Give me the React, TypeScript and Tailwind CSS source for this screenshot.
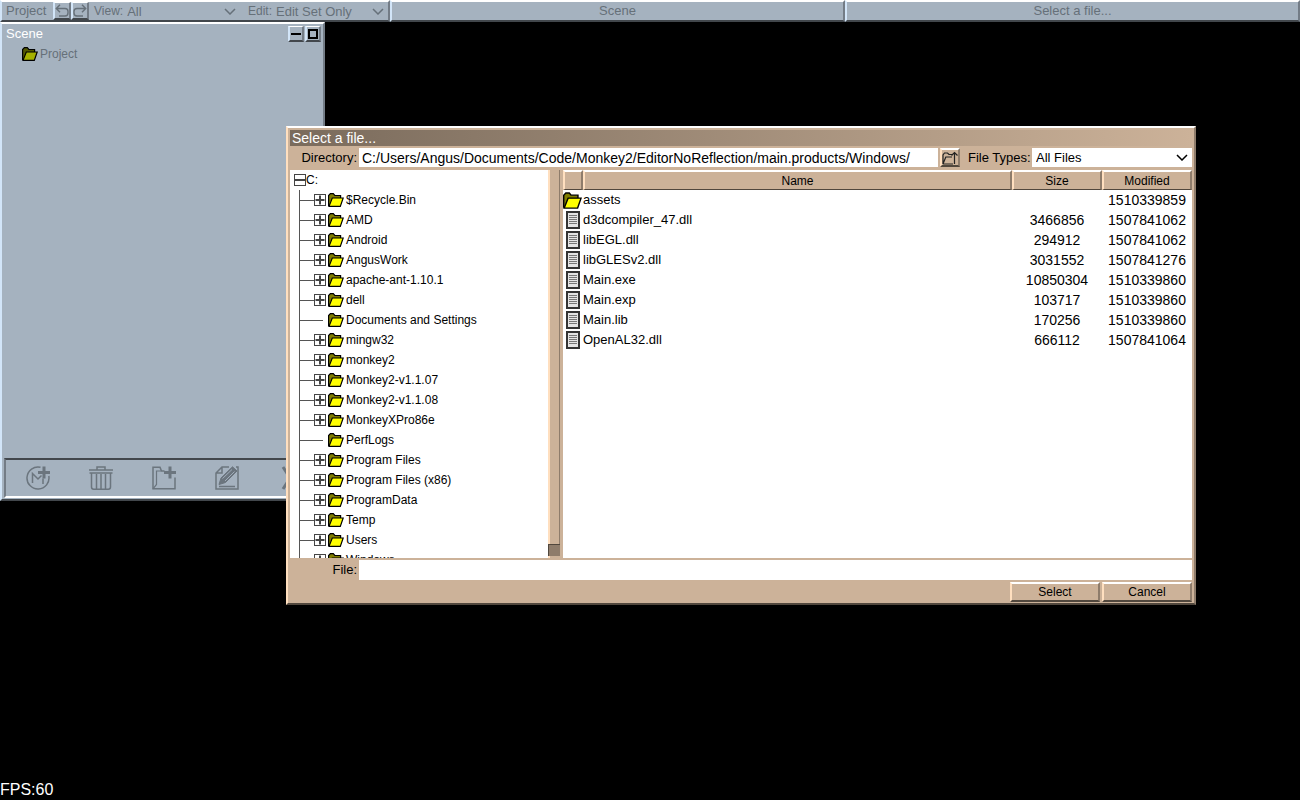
import { ReactNode } from "react";

interface TreeNode {
  name: string;
  leaf?: boolean;
}

interface FileEntry {
  name: string;
  size?: string;
  modified: string;
  folder?: boolean;
}

const tree: TreeNode[] = [
  { name: "$Recycle.Bin" },
  { name: "AMD" },
  { name: "Android" },
  { name: "AngusWork" },
  { name: "apache-ant-1.10.1" },
  { name: "dell" },
  { name: "Documents and Settings", leaf: true },
  { name: "mingw32" },
  { name: "monkey2" },
  { name: "Monkey2-v1.1.07" },
  { name: "Monkey2-v1.1.08" },
  { name: "MonkeyXPro86e" },
  { name: "PerfLogs", leaf: true },
  { name: "Program Files" },
  { name: "Program Files (x86)" },
  { name: "ProgramData" },
  { name: "Temp" },
  { name: "Users" },
  { name: "Windows" },
];

const files: FileEntry[] = [
  { name: "assets", modified: "1510339859", folder: true },
  { name: "d3dcompiler_47.dll", size: "3466856", modified: "1507841062" },
  { name: "libEGL.dll", size: "294912", modified: "1507841062" },
  { name: "libGLESv2.dll", size: "3031552", modified: "1507841276" },
  { name: "Main.exe", size: "10850304", modified: "1510339860" },
  { name: "Main.exp", size: "103717", modified: "1510339860" },
  { name: "Main.lib", size: "170256", modified: "1510339860" },
  { name: "OpenAL32.dll", size: "666112", modified: "1507841064" },
];

// raised edges, light from the top left
const blueEdge =
  "border-t-2 border-r-2 border-b-2 border-l-2 border-t-white border-r-[#737c86] border-b-[#42474c] border-l-[#d2e5f8]";
const smallBlueEdge =
  "border-t border-r-2 border-b-2 border-l-2 border-t-white border-r-[#737c86] border-b-[#42474c] border-l-[#d2e5f8]";
const tanEdge =
  "border-t-2 border-r-2 border-b-2 border-l-2 border-t-white border-r-[#8e7c6b] border-b-[#51473d] border-l-[#ffdfbf]";
const headEdge =
  "border-t-2 border-r-2 border-b border-l-2 border-t-white border-r-[#8e7c6b] border-b-[#51473d] border-l-[#ffdfbf]";

const FolderIcon = ({ dim = false, large = false }: { dim?: boolean; large?: boolean }) => (
  <svg
    viewBox="0 0 16 14"
    className={large ? "h-[17px] w-[19px] shrink-0" : "h-[14px] w-4 shrink-0"}
    stroke="#000"
    strokeWidth="1.2"
  >
    <path d="M.6 13V2.600L2.400.7H5.300L6.800 2.500H12.600V5" fill={dim ? "#535900" : "#807d00"} />
    <path d="M1 13.400L4.300 5H15.200L12.300 13.400z" fill={dim ? "#a5b200" : "#ff0"} />
  </svg>
);

const FileIcon = () => (
  <svg viewBox="0 0 14 18" className="h-[18px] w-[14px] shrink-0">
    <rect x="1" y="1" width="12" height="16" fill="#e4e4e4" stroke="#333" strokeWidth="2" />
    <path d="M3 4.500h8M3 6.500h8M3 8.500h8M3 10.500h8M3 12.500h8" stroke="#777" />
  </svg>
);

const Expander = ({ open = false }: { open?: boolean }) => (
  <svg viewBox="0 0 12 12" className="h-3 w-3 shrink-0" stroke="#444">
    <rect x=".5" y=".5" width="11" height="11" fill="#fff" />
    <path d={open ? "M1 6h10" : "M1.5 6h9M6 1.5v9"} strokeWidth="2" />
  </svg>
);

const Chevron = () => (
  <svg viewBox="0 0 12 7" className="h-[7px] w-3 shrink-0" fill="none" stroke="currentColor" strokeWidth="1.5">
    <path d="M1 1L6 6L11 1" />
  </svg>
);

interface SelectProps {
  id: string;
  value: string;
  className: string;
}

const Select = ({ id, value, className }: SelectProps) => (
  <span className={`relative flex items-center text-[13px] ${className}`}>
    <select id={id} className="h-full w-full appearance-none bg-transparent pl-1 outline-none">
      <option>{value}</option>
    </select>
    <span className="pointer-events-none absolute right-1">
      <Chevron />
    </span>
  </span>
);

const IconButton = ({ label, className, children }: { label: string; className: string; children: ReactNode }) => (
  <button aria-label={label} className={`flex shrink-0 items-center justify-center ${className}`}>
    {children}
  </button>
);

const TopBar = () => (
  <header className="flex h-[22px] bg-[#a5b2bf] text-[13px] text-[#667079]">
    <div className={`flex w-[30%] items-center ${blueEdge}`}>
      <span className="w-[51px] shrink-0 pl-1">Project</span>
      <IconButton label="Undo" className={`h-[18px] w-[18px] ${smallBlueEdge}`}>
        <svg viewBox="0 0 14 14" className="h-[14px] w-[14px] shrink-0" fill="none" stroke="currentColor" strokeWidth="1.4">
          <path d="M5 .8L1.300 4.500L5 8.200M1.500 4.500H10q3 0 3 3v1.500q0 3-3 3H4" />
        </svg>
      </IconButton>
      <IconButton label="Redo" className={`h-[18px] w-[18px] ${smallBlueEdge}`}>
        <svg viewBox="0 0 14 14" className="h-[14px] w-[14px] shrink-0" fill="none" stroke="currentColor" strokeWidth="1.4">
          <path d="M9 .8L12.700 4.500L9 8.200M12.500 4.500H4q-3 0-3 3v1.500q0 3 3 3h6" />
        </svg>
      </IconButton>
      <label htmlFor="view" className="ml-[5px] text-xs">
        View:
      </label>
      <Select id="view" value="All" className="h-full flex-1" />
      <label htmlFor="edit" className="ml-2 text-xs">
        Edit:
      </label>
      <Select id="edit" value="Edit Set Only" className="h-full w-[116px]" />
    </div>
    <button className={`w-[35%] leading-4 ${blueEdge}`}>Scene</button>
    <button className={`w-[35%] leading-4 ${blueEdge}`}>Select a file...</button>
  </header>
);

const tools = [
  {
    label: "New material",
    icon: (
      <>
        <path d="M14.500 1.300a11 11 0 1 0 8.300 8.700" />
        <path d="M6.500 17V7.500L12 13l3.500-3.500M17 12.500V18" />
        <path d="M18 .5v12M12 6.500h12" strokeWidth="3" />
      </>
    ),
  },
  {
    label: "Delete",
    icon: (
      <>
        <path d="M8 3.500V1h8V3.500M0 4h24M.5 7h23" />
        <path d="M2.500 7v14q0 2.200 2.200 2.200h14.600q2.200 0 2.200-2.200V7M7.500 8v15M12 8v15M16.500 8v15" />
      </>
    ),
  },
  {
    label: "New folder",
    icon: (
      <>
        <path d="M12.500 5H9.500L8 1.200H1v21.600h22V11.500" />
        <path d="M1 22.800L4.500 18.500V5H9" strokeWidth="1.2" />
        <path d="M18 .5v12M12 6.500h12" strokeWidth="3" />
      </>
    ),
  },
  {
    label: "Edit",
    icon: (
      <>
        <path d="M14 1H7L1 7v16h22V1h-2M7 1v6H1M4 20.500h16" />
        <path d="M4 18.500L6 12L17.500.8L22 5L10.500 16.500z" fill="currentColor" strokeWidth="1" />
        <path d="M7.500 12.500L17 3.500M10 15L19.500 5.500" stroke="#a5b2bf" strokeWidth=".9" />
      </>
    ),
  },
  {
    label: "Close",
    icon: <path d="M5 1l14 22M19 1L5 23" strokeWidth="3" />,
  },
];

const SceneWindow = () => (
  <section className={`absolute top-[22px] left-0 w-1/4 bg-[#a5b2bf] ${blueEdge}`}>
    <div className="flex h-5 items-center gap-px pr-0.5 pl-1">
      <h2 className="flex-1 text-[13px] text-white">Scene</h2>
      <IconButton label="Minimise" className={`h-4 w-4 ${smallBlueEdge}`}>
        <span className="h-0.5 w-[10px] shrink-0 bg-black" />
      </IconButton>
      <IconButton label="Maximise" className={`h-4 w-4 ${smallBlueEdge}`}>
        <span className="h-[10px] w-[10px] shrink-0 border-2 border-black" />
      </IconButton>
    </div>
    <div className="flex h-[414px] items-start pl-5">
      <div className="flex h-5 items-center gap-0.5 text-xs text-[#667079]">
        <FolderIcon dim />
        Project
      </div>
    </div>
    <div className="mx-0.5 grid h-[40px] grid-cols-5 border-t-2 border-b-2 border-l-2 border-t-[#42474c] border-b-white border-l-[#737c86] text-[#6b757e]">
      {tools.map((tool) => (
        <IconButton key={tool.label} label={tool.label} className="h-full">
          <svg viewBox="0 0 24 24" className="h-6 w-6" fill="none" stroke="currentColor" strokeWidth="1.500">
            {tool.icon}
          </svg>
        </IconButton>
      ))}
    </div>
    <div className="h-px" />
  </section>
);

const DirectoryTree = () => (
  <div className="w-[258px] shrink-0 overflow-hidden bg-white text-xs">
    <div className="flex h-5 items-center pl-1">
      <Expander open />
      C:
    </div>
    <ul className="ml-[9px] border-l border-[#555]">
      {tree.map((node) => (
        <li key={node.name} className="flex h-5 items-center">
          {node.leaf ? (
            <span className="mr-[5px] h-px w-[23px] bg-[#555]" />
          ) : (
            <>
              <span className="h-px w-[14px] bg-[#555]" />
              <button aria-label={`Expand ${node.name}`} className="mr-0.5">
                <Expander />
              </button>
            </>
          )}
          <FolderIcon />
          <span className="ml-0.5 whitespace-nowrap">{node.name}</span>
        </li>
      ))}
    </ul>
  </div>
);

const FileTable = () => (
  <div className="min-w-0 flex-1 bg-white">
    <table className="w-full table-fixed border-separate border-spacing-0">
      <thead className="bg-[#ccb299] text-xs">
        <tr className="h-5">
          <th aria-label="Type" className={`w-5 p-0 ${headEdge}`} />
          <th className={`p-0 font-normal ${headEdge}`}>Name</th>
          <th className={`w-[90px] p-0 font-normal ${headEdge}`}>Size</th>
          <th className={`w-[90px] p-0 font-normal ${headEdge}`}>Modified</th>
        </tr>
      </thead>
      <tbody>
        {files.map((file) => (
          <tr key={file.name} className="h-5 leading-5">
            <td className="p-0">
              <span className="flex h-5 w-[19px] items-center justify-center">
                {file.folder ? <FolderIcon large /> : <FileIcon />}
              </span>
            </td>
            <td className="p-0 text-[13px] leading-5">{file.name}</td>
            <td className="p-0 text-center text-sm leading-5">{file.size}</td>
            <td className="p-0 text-center text-sm leading-5">{file.modified}</td>
          </tr>
        ))}
      </tbody>
    </table>
  </div>
);

const FileDialog = () => (
  <section
    role="dialog"
    aria-label="Select a file"
    className={`absolute top-[126px] left-[22%] w-[70%] bg-[#ccb299] text-black ${tanEdge}`}
  >
    <div className="px-0.5 pt-0.5">
      <h2 className="h-4 bg-linear-to-r from-[#7a6b5c] to-[#ccb299] pl-0.5 text-sm leading-4 text-white">
        Select a file...
      </h2>
      <div className="mt-0.5 flex h-[19px] items-center text-[13px]">
        <label htmlFor="directory" className="w-[69px] shrink-0 pr-0.5 text-right">
          Directory:
        </label>
        <input
          id="directory"
          defaultValue="C:/Users/Angus/Documents/Code/Monkey2/EditorNoReflection/main.products/Windows/"
          className="h-full min-w-0 flex-1 bg-white pl-[3px] text-sm outline-none"
        />
        <IconButton label="Parent folder" className={`mx-0.5 h-[19px] w-5 ${tanEdge}`}>
          <svg viewBox="0 0 16 14" className="h-[14px] w-4 shrink-0" fill="none" stroke="#222" strokeWidth="1.2">
            <path d="M1 13V4L2.500 2H5.500L7 3.500H10M1 13L3.800 6H10M1 13H11" />
            <path d="M12.500 13V1.500M9.500 4.500L12.500 1.500L15.500 4.500" />
          </svg>
        </IconButton>
        <label htmlFor="types" className="ml-1.5 w-[64px] shrink-0">
          File Types:
        </label>
        <Select id="types" value="All Files" className="h-full w-[160px] bg-white" />
      </div>
      <div className="mt-[3px] flex h-[388px]">
        <DirectoryTree />
        <div className="mr-[3px] flex w-3 shrink-0 flex-col justify-end bg-linear-to-r from-[#ffdfbf] from-[2px] to-[#ccb299] to-[2px] pb-0.5">
          <span className="flex-1 border-r border-[#8e7c6b]" />
          <span className="h-3 border-t border-l border-[#51473d] bg-[#8e7c6b]" />
        </div>
        <FileTable />
      </div>
      <div className="mt-0.5 flex h-5 items-center text-[13px]">
        <label htmlFor="file" className="w-[69px] shrink-0 pr-0.5 text-right">
          File:
        </label>
        <input id="file" className="h-full min-w-0 flex-1 bg-white px-[3px] outline-none" />
      </div>
      <div className="mt-0.5 flex h-[21px] justify-end gap-0.5 text-xs">
        <button className={`h-5 w-[90px] leading-4 ${tanEdge}`}>Select</button>
        <button className={`h-5 w-[90px] leading-4 ${tanEdge}`}>Cancel</button>
      </div>
    </div>
  </section>
);

const App = () => (
  <div className="relative flex h-screen flex-col justify-between overflow-hidden bg-black font-['Liberation_Sans',Arial,sans-serif]">
    <TopBar />
    <SceneWindow />
    <FileDialog />
    <footer className="text-base leading-5 text-white">FPS:60</footer>
  </div>
);

export default App;
